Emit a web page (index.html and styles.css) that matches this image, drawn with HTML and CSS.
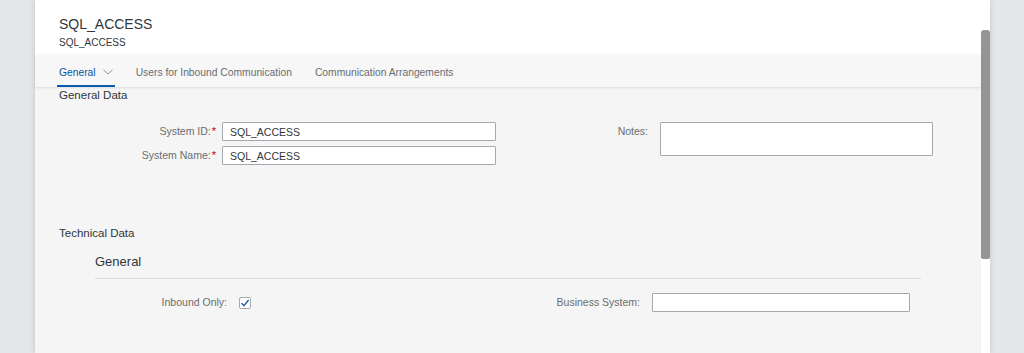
FILE: index.html
```html
<!DOCTYPE html>
<html lang="en">
<head>
    <meta charset="UTF-8">
    <meta name="viewport" content="width=device-width, initial-scale=1.0">
    <title>SQL_ACCESS - Communication System</title>
    <link rel="stylesheet" href="styles.css">
</head>
<body>
    <div class="page">
        <div class="main">
            <div class="header">
                <div class="title">SQL_ACCESS</div>
                <div class="subtitle">SQL_ACCESS</div>
            </div>

            <div class="tabs">
                <div class="tab active">General
                    <svg class="chevron" width="10" height="6" viewBox="0 0 10 6"><path d="M0.5 0.8 L5 5 L9.5 0.8" fill="none" stroke="currentColor" stroke-width="0.9"/></svg>
                </div>
                <div class="tab">Users for Inbound Communication</div>
                <div class="tab">Communication Arrangements</div>
            </div>

            <div class="content">
                <div class="section-title">General Data</div>
                <div class="form general-form">
                    <label class="label required">System ID:</label>
                    <input class="input" type="text" value="SQL_ACCESS">
                    <label class="label notes-label">Notes:</label>
                    <textarea class="textarea"></textarea>
                    <label class="label required">System Name:</label>
                    <input class="input" type="text" value="SQL_ACCESS">
                </div>

                <div class="section-title technical">Technical Data</div>
                <div class="subsection">
                    <div class="subsection-title">General</div>
                    <div class="form tech-form">
                        <label class="label">Inbound Only:</label>
                        <div class="checkbox">
                            <svg width="10" height="10" viewBox="0 0 10 10"><path d="M1.6 5.2 L4 7.6 L8.6 2" fill="none" stroke="#0854a0" stroke-width="1.3"/></svg>
                        </div>
                        <label class="label">Business System:</label>
                        <input class="input" type="text" value="">
                    </div>
                </div>
            </div>
        </div>
        <div class="scrollbar">
            <div class="thumb"></div>
        </div>
    </div>
</body>
</html>
```

FILE: styles.css
```css
body {
    margin: 0;
    height: 100vh;
    display: flex;
    padding: 0 34px 0 35px;
    background: #e4e6e8;
    font-family: "Liberation Sans", Arial, sans-serif;
    color: #32363a;
    overflow: hidden;
}
.page {
    flex: 1;
    display: flex;
    background: #f5f5f5;
    box-shadow: 0 0 6px rgba(0, 0, 0, 0.15);
}
.main {
    flex: 1;
    display: flex;
    flex-direction: column;
}
.header {
    background: #fff;
    padding: 16px 24px 5px;
}
.title {
    font-size: 14px;
    line-height: 17px;
}
.subtitle {
    font-size: 10px;
    line-height: 12px;
    margin-top: 4px;
}
.tabs {
    display: flex;
    padding-left: 22px;
    background: #f7f7f7;
    box-shadow: 0 1px 2px rgba(0, 0, 0, 0.1);
    position: relative;
}
.tab {
    display: flex;
    align-items: center;
    font-size: 10.3px;
    line-height: 13px;
    padding: 12px 2px 6px;
    border-bottom: 2px solid transparent;
    margin-right: 19px;
    color: #6a6d70;
}
.tab.active {
    color: #0854a0;
    border-bottom-color: #0a5cb0;
}
.chevron {
    margin-left: 7px;
    margin-top: -2px;
    color: #6f8fb3;
}
.content {
    padding: 1px 24px 0;
}
.section-title {
    font-size: 11.5px;
    line-height: 14px;
}
.form {
    display: grid;
    column-gap: 5px;
    row-gap: 5px;
    align-items: center;
}
.general-form {
    grid-template-columns: 158px 274px 154px 273px;
    margin-top: 20px;
}
.label {
    font-size: 10.5px;
    line-height: 13px;
    color: #6a6d70;
    text-align: right;
    padding-right: 7px;
}
.label.required {
    padding-right: 1px;
}
.label.required::after {
    content: "*";
    color: #bb0000;
    margin-left: 1px;
    font-size: 11px;
}
.input {
    box-sizing: border-box;
    height: 19px;
    border: 1px solid #a3a9b0;
    border-radius: 1px;
    background: #fff;
    padding: 0 7px;
    font-family: inherit;
    font-size: 10.5px;
    color: #32363a;
    outline: none;
}
.notes-label {
    align-self: center;
}
.textarea {
    grid-row: span 2;
    align-self: start;
    box-sizing: border-box;
    height: 34px;
    border: 1px solid #a3a9b0;
    border-radius: 1px;
    background: #fff;
    resize: none;
    margin: 0;
}
.technical {
    margin-top: 61px;
}
.subsection {
    margin: 14px 36px 0;
    width: 826px;
}
.subsection-title {
    font-size: 13px;
    line-height: 16px;
    padding-bottom: 8px;
    border-bottom: 1px solid #dcdcdc;
}
.tech-form {
    grid-template-columns: 139px 264px 139px 258px;
    margin-top: 14px;
}
.checkbox {
    box-sizing: border-box;
    width: 12px;
    height: 12px;
    border: 1px solid #a3a9b0;
    border-radius: 2px;
    background: #fff;
    display: flex;
    align-items: center;
    justify-content: center;
}
.scrollbar {
    width: 9px;
    background: #fff;
    padding-top: 30px;
}
.thumb {
    height: 229px;
    background: #959595;
    border-radius: 3px 3px 2px 2px;
}
```
